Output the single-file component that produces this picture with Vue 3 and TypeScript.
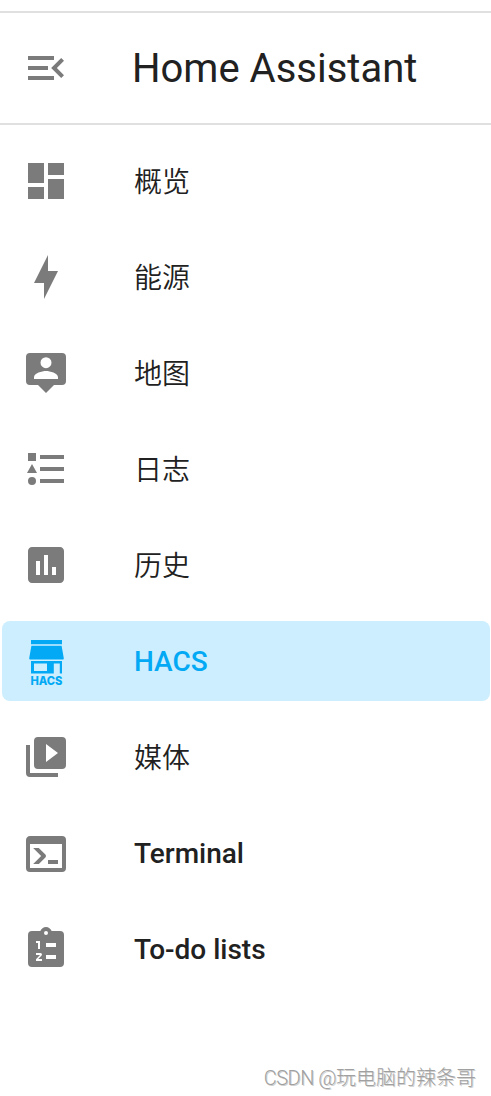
<script setup lang="ts">
interface Item {
  label: string
  icon: string
  path: string
  latin?: boolean
  active?: boolean
}

const menuPath =
  'M21,15.61L19.59,17L14.58,12L19.59,7L21,8.39L17.44,12L21,15.61M3,6H16V8H3V6M3,13V11H13V13H3M3,18V16H16V18H3Z'

const items: Item[] = [
  { label: '概览', icon: 'dashboard', path: 'M13,3V9H21V3M13,21H21V11H13M3,21H11V15H3M3,13H11V3H3V13Z' },
  { label: '能源', icon: 'energy', path: 'M11 15H6L13 1V9H18L11 23V15Z' },
  {
    label: '地图',
    icon: 'map',
    path: 'M20,2H4A2,2 0 0,0 2,4V16A2,2 0 0,0 4,18H8L12,22L16,18H20A2,2 0 0,0 22,16V4A2,2 0 0,0 20,2M12,4.1A2.75,2.75 0 0,1 14.75,6.85A2.75,2.75 0 0,1 12,9.6A2.75,2.75 0 0,1 9.25,6.85A2.75,2.75 0 0,1 12,4.1M18,15H6V14.1C6,12.1 10,11 12,11C14,11 18,12.1 18,14.1V15Z',
  },
  {
    label: '日志',
    icon: 'logbook',
    path: 'M5,9.5L7.5,14H2.5L5,9.5M3,4H7V8H3V4M5,20A2,2 0 0,0 7,18A2,2 0 0,0 5,16A2,2 0 0,0 3,18A2,2 0 0,0 5,20M9,5V7H21V5H9M9,19H21V17H9V19M9,13H21V11H9V13Z',
  },
  {
    label: '历史',
    icon: 'history',
    path: 'M9 17H7V10H9V17M13 17H11V7H13V17M17 17H15V13H17V17M19 3H5C3.9 3 3 3.9 3 5V19C3 20.1 3.9 21 5 21H19C20.1 21 21 20.1 21 19V5C21 3.9 20.1 3 19 3Z',
  },
  {
    label: 'HACS',
    icon: 'hacs',
    path: 'M4.5,1.5H20V3.6H4.5ZM4.7,4.4H19.8L20.9,10.6Q21,11.2 20.4,11.2H4.2Q3.5,11.2 3.6,10.6ZM4.5,12H20V18.3H18.9V13.2H15.9V18.3H4.5ZM6,13.3V17H12.5V13.3Z',
    latin: true,
    active: true,
  },
  {
    label: '媒体',
    icon: 'media',
    path: 'M4,6H2V20A2,2 0 0,0 4,22H18V20H4V6M20,2H8A2,2 0 0,0 6,4V16A2,2 0 0,0 8,18H20A2,2 0 0,0 22,16V4A2,2 0 0,0 20,2M12,14.5V5.5L18,10L12,14.5Z',
  },
  {
    label: 'Terminal',
    icon: 'terminal',
    path: 'M20,19.5V7.5H4V19.5H20M20,3.5A2,2 0 0,1 22,5.5V19.5A2,2 0 0,1 20,21.5H4A2,2 0 0,1 2,19.5V5.5C2,4.39 2.9,3.5 4,3.5H20M13,17.5V15.5H18V17.5H13M9.58,13.5L5.57,9.5H8.4L11.7,12.8C12.09,13.19 12.09,13.83 11.7,14.22L8.42,17.5H5.59L9.58,13.5Z',
    latin: true,
  },
  {
    label: 'To-do lists',
    icon: 'todo',
    path: 'M19,3H14.82C14.4,1.84 13.3,1 12,1C10.7,1 9.6,1.84 9.18,3H5A2,2 0 0,0 3,5V19A2,2 0 0,0 5,21H19A2,2 0 0,0 21,19V5A2,2 0 0,0 19,3M12,3A1,1 0 0,1 13,4A1,1 0 0,1 12,5A1,1 0 0,1 11,4A1,1 0 0,1 12,3M7,8H9V12H8V9H7V8M10,17V18H7V17.08L9,15H7V14H9.25A0.75,0.75 0 0,1 10,14.75C10,14.95 9.92,15.14 9.79,15.27L8.12,17H10M12,9H17V11H12V9M12,15H17V17H12V15Z',
    latin: true,
  },
]
</script>

<template>
  <aside class="sidebar">
    <header class="header">
      <svg class="icon" viewBox="0 0 24 24"><path :d="menuPath" /></svg>
      <h1 class="title">Home Assistant</h1>
    </header>
    <nav class="nav">
      <a v-for="item in items" :key="item.icon" class="item" :class="{ active: item.active, latin: item.latin }">
        <svg class="icon" viewBox="0 0 24 24">
          <path :d="item.path" fill-rule="evenodd" />
          <text v-if="item.icon === 'hacs'" class="mark" x="4.2" y="23.8" textLength="16" lengthAdjust="spacingAndGlyphs">HACS</text>
        </svg>
        <span class="label">{{ item.label }}</span>
      </a>
    </nav>
    <footer class="credit"><span class="site">CSDN @</span>玩电脑的辣条哥</footer>
  </aside>
</template>

<style>
body {
  margin: 0;
  background: #fff;
}
</style>

<style scoped>
.sidebar {
  box-sizing: border-box;
  width: 491px;
  height: 1096px;
  padding-top: 11px;
  display: flex;
  flex-direction: column;
  overflow: hidden;
  background: #fff;
  color: #212121;
  font-family: Roboto, "Noto Sans CJK SC", sans-serif;
}
.header {
  box-sizing: border-box;
  height: 114px;
  flex: none;
  display: flex;
  align-items: center;
  gap: 62px;
  padding-left: 22px;
  border-top: 2px solid #e0e0e0;
  border-bottom: 2px solid #e0e0e0;
}
.icon {
  display: block;
  flex: none;
  width: 48px;
  height: 48px;
  fill: #7b7b7b;
  overflow: visible;
}
.title {
  margin: 0;
  padding-top: 2px;
  font-size: 40px;
  font-weight: 400;
  line-height: 48px;
  white-space: nowrap;
}
.nav {
  display: flex;
  flex-direction: column;
  gap: 16px;
  padding: 16px 1px 0 2px;
}
.item {
  box-sizing: border-box;
  height: 80px;
  display: flex;
  align-items: center;
  gap: 64px;
  padding-left: 20px;
  border-radius: 8px;
}
.label {
  padding-top: 4px;
  font-size: 28px;
  font-weight: 350;
  line-height: 40px;
  white-space: nowrap;
}
.latin .label {
  padding-top: 2px;
  font-weight: 500;
}
.active {
  background: #cdeefe;
  color: #03a9f4;
}
.active .icon {
  fill: #03a9f4;
}
.mark {
  font-family: Inter, sans-serif;
  font-size: 5.8px;
  font-weight: 800;
}
.credit {
  margin: auto 15px 4px auto;
  font-family: "Noto Sans CJK SC", sans-serif;
  font-size: 20px;
  line-height: 28px;
  font-weight: 300;
  color: #a0a0a0;
  text-shadow: 1px 1px 0 rgba(120, 120, 120, 0.35);
  white-space: nowrap;
}
.site {
  font-family: Roboto, sans-serif;
  letter-spacing: -0.5px;
}
</style>
